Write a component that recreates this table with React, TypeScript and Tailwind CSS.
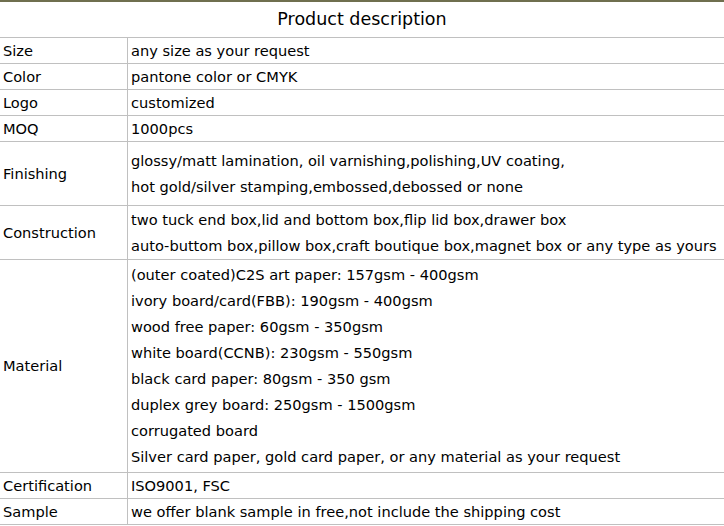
const rows: { label: string; lines: string[]; h: string }[] = [
  { label: 'Size', lines: ['any size as your request'], h: 'h-[26px]' },
  { label: 'Color', lines: ['pantone color or CMYK'], h: 'h-[26px]' },
  { label: 'Logo', lines: ['customized'], h: 'h-[26px]' },
  { label: 'MOQ', lines: ['1000pcs'], h: 'h-[26px]' },
  {
    label: 'Finishing',
    lines: [
      'glossy/matt lamination, oil varnishing,polishing,UV coating,',
      'hot gold/silver stamping,embossed,debossed or none',
    ],
    h: 'h-[64px]',
  },
  {
    label: 'Construction',
    lines: [
      'two tuck end box,lid and bottom box,flip lid box,drawer box',
      'auto-buttom box,pillow box,craft boutique box,magnet box or any type as yours',
    ],
    h: 'h-[54px]',
  },
  {
    label: 'Material',
    lines: [
      '(outer coated)C2S art paper: 157gsm - 400gsm',
      'ivory board/card(FBB): 190gsm - 400gsm',
      'wood free paper: 60gsm - 350gsm',
      'white board(CCNB): 230gsm - 550gsm',
      'black card paper: 80gsm - 350 gsm',
      'duplex grey board: 250gsm - 1500gsm',
      'corrugated board',
      'Silver card paper, gold card paper, or any material as your request',
    ],
    h: 'h-[213px]',
  },
  { label: 'Certification', lines: ['ISO9001, FSC'], h: 'h-[26px]' },
  { label: 'Sample', lines: ['we offer blank sample in free,not include the shipping cost'], h: 'h-[26px]' },
];

export default function App() {
  return (
    <div className="w-[724px] bg-white text-black font-['Comic_Sans_MS','DejaVu_Sans',sans-serif] text-[14.6px]">
      <div className="h-[38px] border-t-2 border-b border-t-[#6f6f4f] border-b-[#c0c0c0] flex items-center justify-center text-[17.5px]">
        Product description
      </div>
      {rows.map((r) => (
        <div key={r.label} className={`flex border-b border-[#c0c0c0] ${r.h}`}>
          <div className="w-[128px] shrink-0 border-r border-[#c0c0c0] flex items-center pl-[3px]">{r.label}</div>
          <div className="flex-1 flex flex-col justify-center pl-[3px] whitespace-nowrap">
            {r.lines.map((l) => (
              <div key={l} className="h-[26px] leading-[26px]">
                {l}
              </div>
            ))}
          </div>
        </div>
      ))}
    </div>
  );
}
